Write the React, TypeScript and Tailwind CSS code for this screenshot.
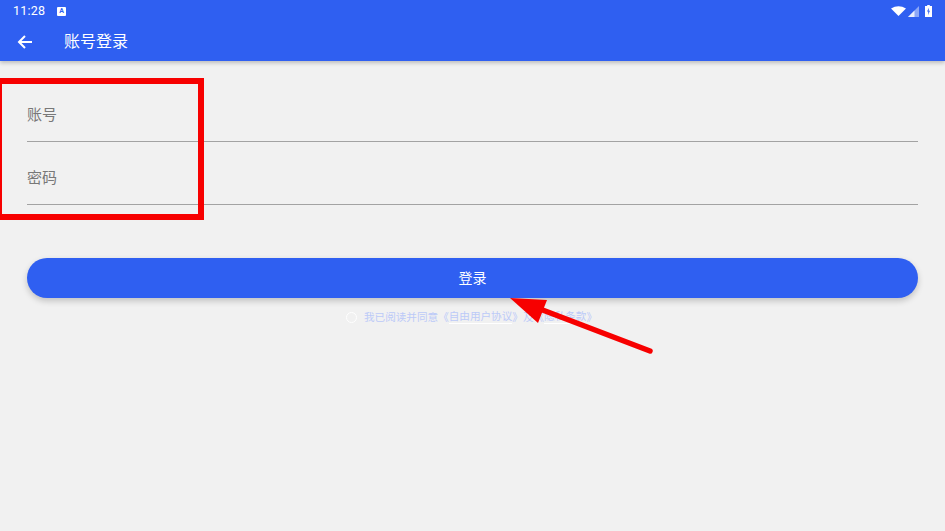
import React from "react";

const cjk = { fontFamily: '"Roboto", "Noto Sans CJK SC", sans-serif' };

function Field({ label, mt }: { label: string; mt: string }) {
  return (
    <div className={`${mt} h-[53px] border-b border-[#a3a3a3] flex items-center text-[15px] text-[#787878]`}>
      <span>{label}</span>
    </div>
  );
}

export default function App() {
  return (
    <div className="relative w-[945px] h-[531px] overflow-hidden bg-[#f1f1f1]" style={cjk}>
      <header className="relative h-[61px] bg-[#2f5ff1] text-white shadow-[0_2px_4px_rgba(0,0,0,0.22)]">
        <div className="h-[22px] flex items-center pl-[13px] pr-[13px]">
          <span className="text-[12.5px] leading-none tracking-[0.2px]">11:28</span>
          <span className="ml-[12px] w-[9px] h-[9px] rounded-[1px] bg-white flex items-center justify-center text-[7px] font-bold leading-none text-[#2f5ff1]">A</span>
          <div className="ml-auto flex items-center">
            <svg width="15" height="10" viewBox="0 0 15 10" className="mr-[2px]">
              <path d="M0 2.5 Q7.5 -2 15 2.5 L7.5 10 Z" fill="#fff" />
            </svg>
            <svg width="11" height="11" viewBox="0 0 11 11" className="mr-[6px]">
              <path d="M11 0 V11 H0 Z" fill="#fff" fillOpacity="0.45" />
              <path d="M6.5 4.5 V11 H0 Z" fill="#fff" fillOpacity="0.8" />
            </svg>
            <svg width="7" height="12" viewBox="0 0 7 12">
              <path d="M2.2 0 H4.8 V1 H7 V12 H0 V1 H2.2 Z" fill="#fff" />
              <path d="M4 2.8 L2 6.6 H3.3 L3 10 L5 5.8 H3.7 Z" fill="#2f5ff1" />
            </svg>
          </div>
        </div>
        <div className="h-[39px] flex items-center">
          <svg width="15" height="14" viewBox="0 0 15 14" className="ml-[17px]" fill="none" stroke="#fff" strokeWidth="2">
            <path d="M15 7 H2 M8 1 L2 7 L8 13" />
          </svg>
          <span className="ml-[32px] text-[16px]">账号登录</span>
        </div>
      </header>

      <main className="px-[27px] pt-[28px]">
        <Field label="账号" mt="mt-0" />
        <Field label="密码" mt="mt-[10px]" />
        <button className="mt-[53px] w-full h-[40px] rounded-full bg-[#2f5ff1] text-white text-[14px] shadow-[0_3px_6px_rgba(0,0,0,0.2)]">
          登录
        </button>
        <div className="mt-[12px] ml-[319px] flex items-center text-[10.6px] leading-[13px] text-[#bccaf8]">
          <span className="w-[11px] h-[11px] rounded-full border border-white mr-[7px] box-border" />
          <span>我已阅读并同意</span>
          <span>《</span>
          <span className="border-b border-white">自由用户协议</span>
          <span>》</span>
          <span>及</span>
          <span>《</span>
          <span className="border-b border-white">隐私条款</span>
          <span>》</span>
        </div>
      </main>

      <div className="absolute left-[-4px] top-[78px] w-[208px] h-[142px] border-[6px] border-[#f70000]" />
      <svg className="absolute left-0 top-0 pointer-events-none" width="945" height="531" viewBox="0 0 945 531">
        <path d="M650 351 L540 309" stroke="#f70000" strokeWidth="5.5" strokeLinecap="round" fill="none" />
        <path d="M510 298 L547 300 L538 323 Z" fill="#f70000" />
      </svg>
    </div>
  );
}
